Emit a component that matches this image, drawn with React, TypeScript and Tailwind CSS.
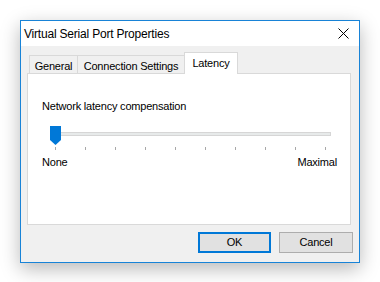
import React from 'react';

const font = { fontFamily: '"Liberation Sans", Arial, sans-serif' };

function Tab(props: { label: string; width: string; active?: boolean }) {
  if (props.active) {
    return (
      <div className={`${props.width} -ml-px -mb-px relative z-10 h-[22px] bg-white border border-b-0 border-[#d9d9d9] flex items-start justify-center pt-[2px] leading-[16px] text-black whitespace-nowrap`}>
        {props.label}
      </div>
    );
  }
  return (
    <div className={`${props.width} -ml-px first:ml-0 h-[18px] bg-[#f0f0f0] border border-b-0 border-[#d9d9d9] flex items-start justify-center pt-[2px] leading-[16px] text-black whitespace-nowrap`}>
      {props.label}
    </div>
  );
}

function LatencySlider() {
  const ticks = Array.from({ length: 10 });
  return (
    <div className="w-[281px] ml-[8px]">
      <div className="relative h-[18px]">
        <div className="absolute left-0 right-0 top-[6px] h-[4px] bg-[#e7eaea] border border-[#d6d6d6]" />
        <svg className="absolute left-0 top-0" width="11" height="19" viewBox="0 0 11 19">
          <path d="M0 0 H11 V14 L5.5 19 L0 14 Z" fill="#0078d7" />
        </svg>
      </div>
      <div className="flex justify-between w-[271px] ml-[5px] mt-[3px]">
        {ticks.map((_, i) => (
          <div key={i} className="w-px h-[3px] bg-[#a8a8a8]" />
        ))}
      </div>
    </div>
  );
}

export default function App() {
  return (
    <div className="w-[380px] h-[282px] bg-white pt-[20px] pl-[20px] text-[11px] tracking-[-0.2px]" style={font}>
      <div className="w-[340px] h-[243px] border border-[#1883d7] bg-[#f0f0f0] shadow-[0_6px_18px_rgba(0,0,0,0.28)] flex flex-col">
        <div className="h-[25px] bg-white flex items-center justify-between pl-[3px] pr-[10px]">
          <span className="text-[12px] text-black whitespace-nowrap">Virtual Serial Port Properties</span>
          <svg width="11" height="11" viewBox="0 0 11 11">
            <path d="M0.5 0.5 L10.5 10.5 M10.5 0.5 L0.5 10.5" stroke="#000" strokeWidth="1" />
          </svg>
        </div>
        <div className="pl-[6px] pt-[6px]">
          <div className="flex items-end pl-[2px] h-[21px]">
            <Tab label="General" width="w-[49px]" />
            <Tab label="Connection Settings" width="w-[108px]" />
            <Tab label="Latency" width="w-[54px]" active />
          </div>
          <div className="w-[324px] h-[152px] bg-white border border-[#d9d9d9] pt-[24px] pl-[14px] pr-[13px]">
            <div className="leading-[16px] text-black whitespace-nowrap">Network latency compensation</div>
            <div className="mt-[12px]">
              <LatencySlider />
            </div>
            <div className="flex justify-between mt-[4px] leading-[16px] text-black">
              <span>None</span>
              <span>Maximal</span>
            </div>
          </div>
          <div className="flex justify-end gap-[8px] mt-[7px] w-[326px]">
            <button className="w-[73px] h-[21px] bg-[#e1e1e1] border-2 border-[#0078d7] text-black flex items-center justify-center">
              OK
            </button>
            <button className="w-[74px] h-[21px] bg-[#e1e1e1] border border-[#adadad] text-black flex items-center justify-center">
              Cancel
            </button>
          </div>
        </div>
      </div>
    </div>
  );
}
